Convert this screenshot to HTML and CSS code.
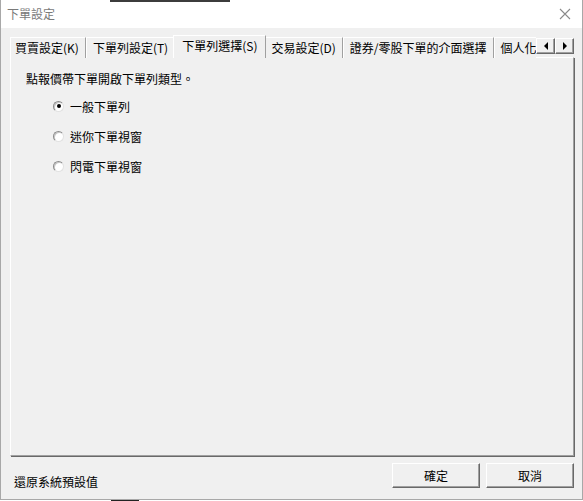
FILE: index.html
```html
<!DOCTYPE html>
<html lang="zh-Hant">
<head>
    <meta charset="UTF-8">
    <title>下單設定</title>
    <link rel="stylesheet" href="styles.css">
</head>
<body>
    <div class="backdrop-top"></div>
    <div class="window">
        <div class="titlebar">
            <span class="title">下單設定</span>
            <svg class="close" width="12" height="12" viewBox="0 0 12 12">
                <path d="M1 1 L11 11 M11 1 L1 11" stroke="#8a8a8a" stroke-width="1.1" fill="none"/>
            </svg>
        </div>
        <div class="content">
            <div class="tabstrip">
                <div class="tabs">
                    <div class="tab">買賣設定(K)</div>
                    <div class="tab">下單列設定(T)</div>
                    <div class="tab active">下單列選擇(S)</div>
                    <div class="tab">交易設定(D)</div>
                    <div class="tab">證券/零股下單的介面選擇</div>
                    <div class="tab">個人化(U)</div>
                </div>
                <div class="scroller">
                    <span class="arrow-btn"><span class="tri left"></span></span>
                    <span class="arrow-btn"><span class="tri right"></span></span>
                </div>
            </div>
            <div class="panel">
                <p class="heading">點報價帶下單開啟下單列類型。</p>
                <div class="options">
                    <label class="option"><span class="radio checked"></span>一般下單列</label>
                    <label class="option"><span class="radio"></span>迷你下單視窗</label>
                    <label class="option"><span class="radio"></span>閃電下單視窗</label>
                </div>
            </div>
            <div class="footer">
                <span class="reset">還原系統預設值</span>
                <div class="buttons">
                    <button class="btn">確定</button>
                    <button class="btn">取消</button>
                </div>
            </div>
        </div>
    </div>
    <div class="backdrop-bottom"></div>
</body>
</html>
```
FILE: styles.css
```css
* {
    margin: 0;
    padding: 0;
    box-sizing: border-box;
}

body {
    background: #fff;
    font-family: "Noto Sans CJK TC", "Liberation Sans", sans-serif;
    font-size: 12px;
    color: #000;
    width: 583px;
    height: 501px;
    overflow: hidden;
    position: relative;
}

/* bits of the app behind the dialog */
.backdrop-top {
    position: absolute;
    left: 110px;
    top: 0;
    width: 120px;
    height: 2px;
    background: #3c3c3c;
}

.backdrop-bottom {
    position: absolute;
    left: 111px;
    top: 500px;
    width: 28px;
    height: 1px;
    background: #222;
}

.window {
    width: 583px;
    height: 500px;
    background: #f0f0f0;
    border: 1px solid #a8a8a8;
    border-top: none;
    display: flex;
    flex-direction: column;
}

.titlebar {
    height: 28px;
    background: #fff;
    display: flex;
    align-items: center;
    justify-content: space-between;
    padding: 0 11px 0 6px;
}

.title {
    color: #7a7a7a;
    line-height: 16px;
}

.content {
    flex: 1;
    padding: 7px 8px 0 9px;
    display: flex;
    flex-direction: column;
}

.tabstrip {
    display: flex;
    height: 23px;
    position: relative;
    z-index: 1;
}

.tabs {
    flex: 1;
    display: flex;
    align-items: flex-end;
    overflow: hidden;
}

.tab {
    height: 21px;
    line-height: 19px;
    padding: 0 6px;
    white-space: nowrap;
    border-top: 1px solid #fff;
    border-left: 1px solid #fff;
    border-right: 1px solid #a0a0a0;
    background: #f0f0f0;
    flex-shrink: 0;
}

.tab:first-child {
    padding-left: 4px;
}

.tab.active {
    height: 24px;
    margin: 0 -2px -1px;
    padding: 0 8px;
    line-height: 19px;
    position: relative;
    z-index: 2;
}

.scroller {
    display: flex;
    padding-top: 3px;
}

.arrow-btn {
    width: 19px;
    height: 16px;
    background: #f0f0f0;
    border-top: 1px solid #fff;
    border-left: 1px solid #fff;
    border-right: 1px solid #696969;
    border-bottom: 1px solid #696969;
    box-shadow: inset -1px -1px 0 #a0a0a0;
    display: flex;
    align-items: center;
    justify-content: center;
}

.tri {
    width: 0;
    height: 0;
    border-top: 4px solid transparent;
    border-bottom: 4px solid transparent;
}

.tri.left {
    border-right: 4px solid #000;
}

.tri.right {
    border-left: 4px solid #000;
}

.panel {
    height: 399px;
    border-top: 1px solid #fff;
    border-left: 1px solid #fff;
    border-right: 1px solid #a0a0a0;
    border-bottom: 1px solid #a0a0a0;
    box-shadow: 1px 1px 0 #696969;
    padding: 13px 15px 0;
    margin-top: -1px;
}

.heading {
    line-height: 16px;
}

.options {
    display: flex;
    flex-direction: column;
    gap: 14px;
    margin-top: 11px;
    padding-left: 27px;
}

.option {
    display: flex;
    align-items: center;
    height: 16px;
    gap: 6px;
}

.radio {
    width: 11px;
    height: 11px;
    border-radius: 50%;
    background: #fff;
    border: 1px solid;
    border-color: #8a8a8a #e2e2e2 #e2e2e2 #8a8a8a;
    box-shadow: inset 1px 1px 0 #c8c8c8;
    display: flex;
    align-items: center;
    justify-content: center;
}

.radio.checked::after {
    content: "";
    width: 4px;
    height: 4px;
    border-radius: 50%;
    background: #000;
}

.footer {
    flex: 1;
    display: flex;
    justify-content: space-between;
    align-items: flex-start;
    padding-left: 4px;
}

.reset {
    margin-top: 18px;
    line-height: 16px;
}

.buttons {
    display: flex;
    gap: 6px;
    margin-top: 7px;
}

.btn {
    width: 88px;
    height: 25px;
    font-family: inherit;
    font-size: 12px;
    color: #000;
    background: #f0f0f0;
    border-top: 1px solid #fff;
    border-left: 1px solid #fff;
    border-right: 1px solid #696969;
    border-bottom: 1px solid #696969;
    box-shadow: inset -1px -1px 0 #a0a0a0;
}
```
